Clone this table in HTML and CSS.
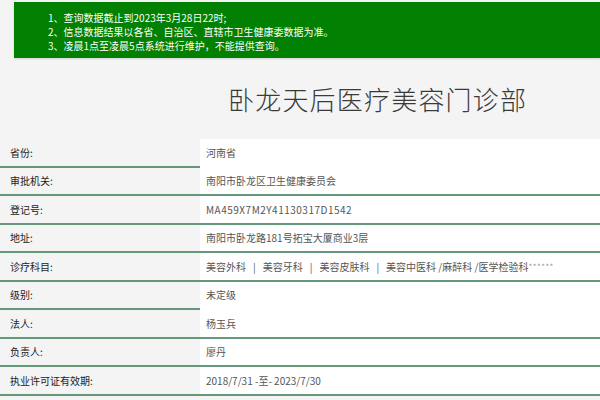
FILE: index.html
```html
<!DOCTYPE html>
<html lang="zh">
<head>
<meta charset="utf-8">
<link rel="stylesheet" href="styles.css">
</head>
<body>
<div class="notice">
  <p>1、查询数据截止到2023年3月28日22时;</p>
  <p>2、信息数据结果以各省、自治区、直辖市卫生健康委数据为准。</p>
  <p>3、凌晨1点至凌晨5点系统进行维护，不能提供查询。</p>
</div>
<h1 class="title">卧龙天后医疗美容门诊部</h1>
<div class="table">
  <div class="row"><div class="label">省份:</div><div class="value noline">河南省</div></div>
  <div class="row"><div class="label">审批机关:</div><div class="value">南阳市卧龙区卫生健康委员会</div></div>
  <div class="row"><div class="label">登记号:</div><div class="value latin">MA459X7M2Y41130317D1542</div></div>
  <div class="row"><div class="label">地址:</div><div class="value">南阳市卧龙路181号拓宝大厦商业3层</div></div>
  <div class="row"><div class="label">诊疗科目:</div><div class="value">美容外科<span class="sep">|</span>美容牙科<span class="sep">|</span>美容皮肤科<span class="sep">|</span>美容中医科 /麻醉科 /医学检验科<span class="stars">******</span></div></div>
  <div class="row"><div class="label">级别:</div><div class="value noline">未定级</div></div>
  <div class="row"><div class="label">法人:</div><div class="value">杨玉兵</div></div>
  <div class="row"><div class="label">负责人:</div><div class="value">廖丹</div></div>
  <div class="row"><div class="label">执业许可证有效期:</div><div class="value">2018/7/31 -至- 2023/7/30</div></div>
</div>
</body>
</html>
```
FILE: styles.css
```css
html, body {
  margin: 0;
  padding: 0;
  background: #f4f4f4;
  font-family: "Noto Sans CJK SC", "Noto Sans", sans-serif;
  overflow: hidden;
}
.notice {
  margin: 2px 0 0 14px;
  height: 56px;
  box-sizing: border-box;
  padding: 9px 0 0 34px;
  background: #018001;
  color: #fff;
  font-size: 10px;
  box-shadow: 0 1px 2px rgba(0,0,0,0.15);
}
.notice p {
  margin: 0;
  line-height: 14px;
  white-space: nowrap;
}
.title {
  margin: 0;
  height: 81px;
  box-sizing: border-box;
  padding: 25px 0 0 228px;
  font-size: 26px;
  line-height: 32px;
  font-weight: 300;
  color: #3a3a3a;
  letter-spacing: 1.2px;
  white-space: nowrap;
}
.table {
  display: flex;
  flex-direction: column;
}
.row {
  display: grid;
  grid-template-columns: 200px 1fr;
  height: 28.5px;
}
.label, .value {
  display: flex;
  align-items: center;
  border-bottom: 2px solid #65987a;
  font-size: 10px;
  white-space: nowrap;
}
.label {
  padding-left: 10px;
  color: #222;
}
.value {
  padding-left: 6px;
  background: #fff;
  color: #555;
}
.value.latin {
  letter-spacing: 0.5px;
}
.sep {
  margin: 0 7px;
}
.stars {
  color: #999;
  font-size: 8px;
  letter-spacing: 0.5px;
}
.value.noline {
  border-bottom-color: #fff;
}
```
